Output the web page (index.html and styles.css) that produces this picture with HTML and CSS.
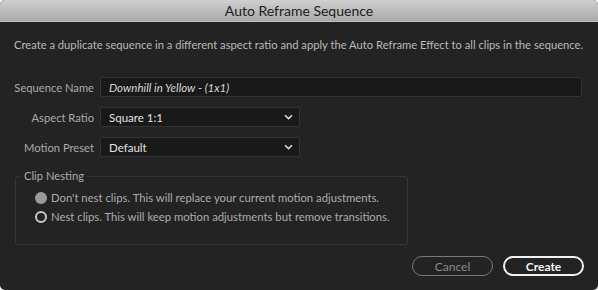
FILE: index.html
```html
<!DOCTYPE html>
<html lang="en">
<head>
    <meta charset="UTF-8">
    <title>Auto Reframe Sequence</title>
    <link rel="stylesheet" href="styles.css">
</head>
<body>
    <main class="dialog">
        <header class="titlebar">Auto Reframe Sequence</header>

        <p class="description">Create a duplicate sequence in a different aspect ratio and apply the Auto Reframe Effect to all clips in the sequence.</p>

        <div class="form-grid">
            <label class="field-label" for="seq-name">Sequence Name</label>
            <div class="text-input" id="seq-name">Downhill in Yellow - (1x1)</div>

            <label class="field-label">Aspect Ratio</label>
            <div class="select">
                <span>Square 1:1</span>
                <svg class="chevron" width="9" height="6" viewBox="0 0 9 6"><path d="M1 1.2 L4.5 4.6 L8 1.2" fill="none" stroke="#d8d8d8" stroke-width="1.6"/></svg>
            </div>

            <label class="field-label">Motion Preset</label>
            <div class="select">
                <span>Default</span>
                <svg class="chevron" width="9" height="6" viewBox="0 0 9 6"><path d="M1 1.2 L4.5 4.6 L8 1.2" fill="none" stroke="#d8d8d8" stroke-width="1.6"/></svg>
            </div>
        </div>

        <fieldset class="nesting">
            <legend class="nesting-legend">Clip Nesting</legend>
            <div class="radio-row">
                <span class="radio radio-checked"></span>
                <span>Don't nest clips. This will replace your current motion adjustments.</span>
            </div>
            <div class="radio-row">
                <span class="radio"></span>
                <span>Nest clips. This will keep motion adjustments but remove transitions.</span>
            </div>
        </fieldset>

        <footer class="actions">
            <button type="button" class="btn btn-cancel">Cancel</button>
            <button type="button" class="btn btn-create">Create</button>
        </footer>
    </main>
</body>
</html>
```

FILE: styles.css
```css
:root {
    --panel-bg: #232323;
    --field-bg: #191919;
    --field-border: #333333;
    --label-color: #ababab;
    --text-color: #d6d6d6;
}

body {
    margin: 0;
    background: #ffffff;
    font-family: 'Lato', 'Open Sans', sans-serif;
}

.dialog {
    width: 598px;
    height: 290px;
    box-sizing: border-box;
    background: var(--panel-bg);
    border-radius: 5px;
    overflow: hidden;
    display: flex;
    flex-direction: column;
}

.titlebar {
    height: 21px;
    line-height: 22px;
    text-align: center;
    font-size: 14px;
    color: #1c1c1c;
    background: linear-gradient(#cfcfcf, #a9a9a9);
    border-bottom: 1px solid #c2c2c2;
}

.description {
    margin: 16px 0 0 14px;
    font-size: 11.2px;
    line-height: 14px;
    color: #b9b9b9;
    white-space: nowrap;
}

.form-grid {
    display: grid;
    grid-template-columns: 80px 482px;
    grid-auto-rows: 20px;
    column-gap: 6px;
    row-gap: 10px;
    margin: 25px 0 0 14px;
    align-items: center;
}

.field-label {
    text-align: right;
    white-space: nowrap;
    font-size: 11.2px;
    color: var(--label-color);
}

.text-input,
.select {
    height: 20px;
    box-sizing: border-box;
    background: var(--field-bg);
    border: 1px solid var(--field-border);
    border-radius: 2px;
    font-size: 11.5px;
    color: var(--text-color);
    display: flex;
    align-items: center;
    padding: 0 8px;
}

.text-input {
    font-style: italic;
}

.select {
    width: 200px;
    justify-content: space-between;
    padding-right: 6px;
    color: #e2e2e2;
}

.nesting {
    margin: 12px 0 0 15px;
    width: 393px;
    height: 76px;
    box-sizing: border-box;
    border: 1px solid #363636;
    border-radius: 3px;
    padding: 5px 0 0 19px;
}

.nesting-legend {
    font-size: 11.2px;
    line-height: 14px;
    color: var(--label-color);
    padding: 0 3px;
    margin-left: -14px;
}

.radio-row {
    display: flex;
    align-items: center;
    gap: 4px;
    height: 19px;
    font-size: 11.3px;
    white-space: nowrap;
    color: var(--label-color);
}

.radio {
    flex: none;
    width: 12px;
    height: 12px;
    box-sizing: border-box;
    border-radius: 50%;
    border: 2px solid #c8c8c8;
}

.radio-checked {
    border: none;
    background: #9a9a9a;
}

.actions {
    display: flex;
    justify-content: flex-end;
    gap: 10px;
    margin: 11px 14px 0 0;
}

.btn {
    width: 81px;
    height: 20px;
    box-sizing: border-box;
    border-radius: 10px;
    background: transparent;
    font-family: inherit;
    font-size: 12px;
    padding: 0;
    cursor: pointer;
}

.btn-cancel {
    border: 1px solid #7a7a7a;
    color: #8a8a8a;
}

.btn-create {
    border: 2px solid #f2f2f2;
    color: #f4f4f4;
    font-weight: 700;
}
```
